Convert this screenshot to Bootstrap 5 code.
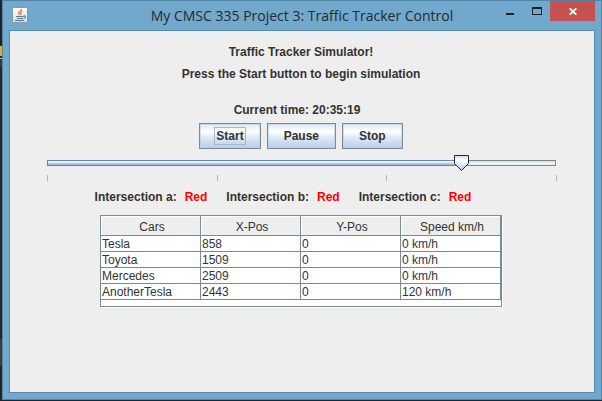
<!DOCTYPE html>
<html lang="en">
<head>
<meta charset="utf-8">
<meta name="viewport" content="width=device-width, initial-scale=1">
<title>My CMSC 335 Project 3: Traffic Tracker Control</title>
<link href="https://cdn.jsdelivr.net/npm/bootstrap@5.3.0/dist/css/bootstrap.min.css" rel="stylesheet">
<style>
:root { --line: #7a8a99; --ink: #333; }
body {
  font: bold 12px/16px "Liberation Sans", Arial, sans-serif;
  color: var(--ink);
  padding: 0 0 1px 2px;
  background: linear-gradient(#242326 0 46px, #f0a52a 46px 56px, #2b2a2d 56px 58px, #b9b9b9 58px 59px, #39383b 59px 67px, #262427 67px 339px, #3c3b3f 339px 366px, #242326 366px);
}
.app-window { background: #72a8cb; border: 1px solid #4f86a8; padding: 0 6px 6px; }
.title-bar { display: grid; grid-template-columns: 1fr auto 1fr; height: 29px; }
.app-icon { margin: 6px 0 0 3px; }
.app-title { font: 14px/30px "Open Sans", "Noto Sans", sans-serif; color: #222b33; }
.win-btn { width: 27px; height: 20px; padding: 0; border: 0; background: transparent; display: block; }
.win-close { width: 45px; background: #c75050; }
.win-btn svg { display: block; margin: auto; }
.pane { background: #eee; border: 1px solid #568bad; padding: 13px 2px 0 0; }
.hint { margin: 6px 0 20px; }
.clock { margin: 0 0 5px; padding-right: 8px; }
.btn-row { gap: 6px; }
.swing-btn {
  font: bold 12px/16px "Liberation Sans", Arial, sans-serif;
  color: var(--ink); height: 26px; padding: 0 16px;
  border: 1px solid var(--line); border-radius: 0;
  background: linear-gradient(#dde8f3, #fff 32%, #e0eaf4 55%, #b8cfe5);
  box-shadow: inset 0 0 0 1px rgba(184, 207, 229, .6);
}
.swing-btn span { display: inline-block; padding: 0 1px; margin: 0 -1px; outline: 1px solid transparent; }
.swing-btn.focused span { outline-color: #a3b8cc; }
.slider-box { display: grid; padding: 0 29px 0 30px; margin-top: 6px; }
.slider-box > * { grid-area: 1 / 1; }
.rail { height: 6px; margin: 5px 7px 0; border: 1px solid var(--line); box-shadow: inset 0 1px #d4dbe1; }
.rail-fill { height: 6px; margin: -1px; border: 1px solid #6382bf; background: linear-gradient(#fff 0 25%, #dce7f1 25% 50%, #b8cfe5 50% 75%, #a3b8cc 75%); }
.speed { -webkit-appearance: none; appearance: none; width: 100%; height: 16px; margin: 0; background: transparent; z-index: 1; }
.speed::-webkit-slider-runnable-track { height: 16px; background: transparent; }
.speed::-webkit-slider-thumb {
  -webkit-appearance: none; width: 15px; height: 16px; border: 0;
  background: url("data:image/svg+xml,%3Csvg xmlns='http://www.w3.org/2000/svg' width='15' height='16'%3E%3Cdefs%3E%3ClinearGradient id='g' x2='0' y2='1'%3E%3Cstop stop-color='%23c8daec'/%3E%3Cstop offset='.3' stop-color='%23fff'/%3E%3Cstop offset='.5' stop-color='%23eaf2f9'/%3E%3Cstop offset='1' stop-color='%23a9c6e2'/%3E%3C/linearGradient%3E%3C/defs%3E%3Cpath d='M.5.5h14v8l-7 7-7-7z' fill='url(%23g)' stroke='%23222b33'/%3E%3C/svg%3E") no-repeat;
}
.ticks { padding: 0 35px 0 37px; margin-top: 4px; }
.ticks i { width: 1px; height: 6px; background: #a3b8cc; }
.signals { gap: 19px; margin-top: 8px; padding-right: 36px; }
.signal-state { color: #f00; margin-left: 8px; }
.scroll-pane { max-width: 402px; margin: 10px auto 0; padding-bottom: 6px; background: #fff; border: 1px solid var(--line); box-shadow: 1px 1px #fff; }
.cars { width: 100%; table-layout: fixed; border-collapse: separate; border-spacing: 0; font-weight: 400; line-height: 13px; }
.cars th, .cars td { padding: 2px 0 0 1px; border: 0 solid var(--line); border-width: 0 1px 1px 0; }
.cars th { font-weight: 400; text-align: center; background: #eee; box-shadow: inset 1px 1px #fff; line-height: 16px; padding: 3px 0 0 3px; }
</style>
<script src="https://cdn.jsdelivr.net/npm/bootstrap@5.3.0/dist/js/bootstrap.bundle.min.js" defer></script>
</head>
<body class="min-vh-100 d-flex">
<div class="app-window flex-grow-1 d-flex flex-column">
  <header class="title-bar">
    <svg class="app-icon" width="16" height="16" viewBox="0 0 16 16" aria-hidden="true">
      <defs><linearGradient id="tile" x2="0" y2="1"><stop stop-color="#fff"/><stop offset="1" stop-color="#d5dbe0"/></linearGradient></defs>
      <rect x=".5" y=".5" width="15" height="15" rx="1" fill="url(#tile)" stroke="#8797a2"/>
      <path d="M9.500 2C9.800 4 6 4.500 6.500 6.500l1 1.500M10.500 4.500C8 5.500 8.200 6.300 9 7.200L8.500 8.300" fill="none" stroke="#ed8021" stroke-width="1.300"/>
      <path d="M4 9.500h7.500M5 11.500h6M3 13.500h9M11.500 9c2.500-.8 2.500 2 0 2.300" fill="none" stroke="#4f7d9f" stroke-width="1.100"/>
    </svg>
    <h1 class="app-title m-0 text-nowrap">My CMSC 335 Project 3: Traffic Tracker Control</h1>
    <div class="d-flex justify-content-end">
      <button type="button" class="win-btn" aria-label="Minimize"><svg width="11" height="8"><path d="M2 6h8v2H2z" fill="#222"/></svg></button>
      <button type="button" class="win-btn" aria-label="Maximize"><svg width="10" height="8"><path d="M0 0h10v8H0zM1 2v5h8V2z" fill="#222" fill-rule="evenodd"/></svg></button>
      <button type="button" class="win-btn win-close" aria-label="Close"><svg width="8" height="7" viewBox="0 0 8 7"><path d="M.7.3 7.300 6.700M7.300.3.7 6.700" stroke="#fff" stroke-width="1.800"/></svg></button>
    </div>
  </header>
  <main class="pane flex-grow-1">
    <p class="text-center m-0">Traffic Tracker Simulator!</p>
    <p class="hint text-center">Press the Start button to begin simulation</p>
    <p class="clock text-center">Current time: <time>20:35:19</time></p>
    <div class="btn-row d-flex justify-content-center">
      <button type="button" class="swing-btn focused"><span>Start</span></button>
      <button type="button" class="swing-btn"><span>Pause</span></button>
      <button type="button" class="swing-btn"><span>Stop</span></button>
    </div>
    <div class="slider-box">
      <div class="rail"><div class="rail-fill" style="width:81.5%"></div></div>
      <input class="speed" type="range" min="0" max="3000" value="2445" aria-label="Simulation progress">
    </div>
    <div class="ticks d-flex justify-content-between"><i></i><i></i><i></i><i></i></div>
    <div class="signals d-flex justify-content-center">
      <div>Intersection a:<span class="signal-state">Red</span></div>
      <div>Intersection b:<span class="signal-state">Red</span></div>
      <div>Intersection c:<span class="signal-state">Red</span></div>
    </div>
    <div class="scroll-pane">
      <table class="cars">
        <thead><tr><th scope="col">Cars</th><th scope="col">X-Pos</th><th scope="col">Y-Pos</th><th scope="col">Speed km/h</th></tr></thead>
        <tbody>
          <tr><td>Tesla</td><td>858</td><td>0</td><td>0 km/h</td></tr>
          <tr><td>Toyota</td><td>1509</td><td>0</td><td>0 km/h</td></tr>
          <tr><td>Mercedes</td><td>2509</td><td>0</td><td>0 km/h</td></tr>
          <tr><td>AnotherTesla</td><td>2443</td><td>0</td><td>120 km/h</td></tr>
        </tbody>
      </table>
    </div>
  </main>
</div>
</body>
</html>
